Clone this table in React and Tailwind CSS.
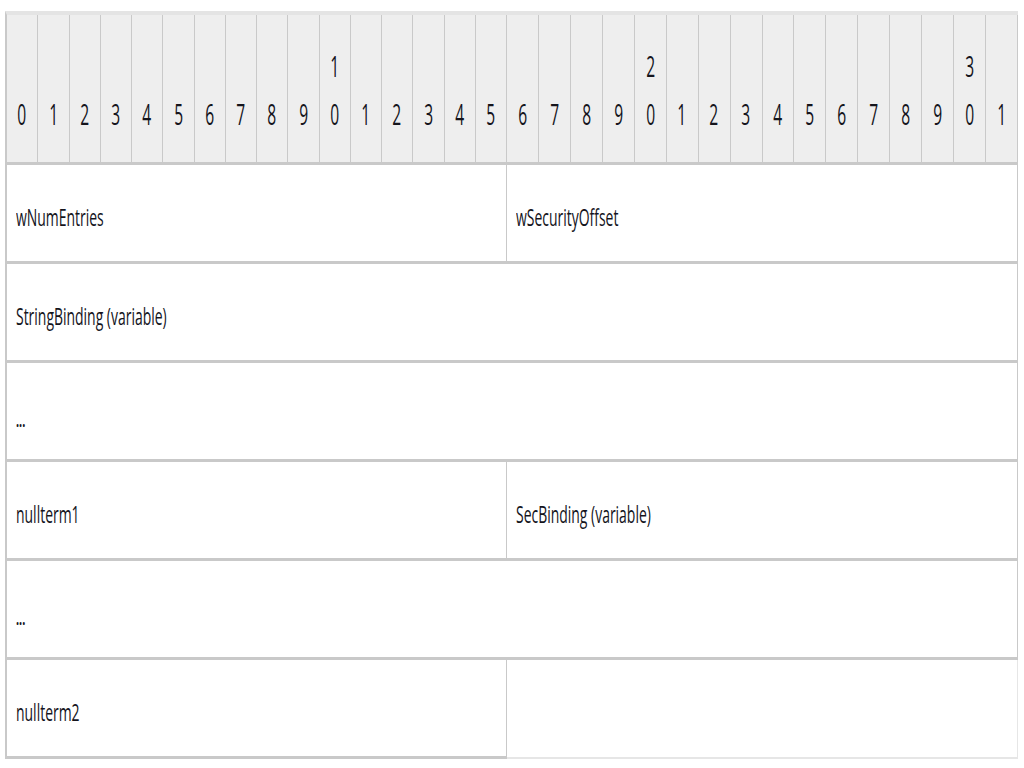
import React from 'react';

const bits = Array.from({ length: 32 }, (_, i) => i);

const Txt = ({ children }) => (
    <span className='inline-block origin-left scale-x-[0.9] scale-y-[1.5] whitespace-nowrap'>{children}</span>
);

const HeadCell = ({ n }) => {
    const tens = n % 10 === 0 && n > 0 ? String(n / 10) : '';
    return (
        <div className='flex flex-col justify-end items-center border-r border-[#c9c9c9] bg-[#eeeeee] pb-[24px]'>
            <div className='flex flex-col items-center origin-bottom scale-x-[0.78] scale-y-[1.5] text-[20px] leading-[32px] font-medium'>
                <span className='h-[32px]'>{tens}</span>
                <span>{n % 10}</span>
            </div>
        </div>
    );
};

const Cell = ({ label, className = '' }) => (
    <div className={`flex items-center pl-[9px] pt-[10px] border-r border-[#c9c9c9] ${className}`}>
        {label && <Txt>{label}</Txt>}
    </div>
);

const App = () => {
    return (
        <div className='w-[1024px] h-[768px] bg-white pt-[11px] pl-[5px] pr-[6px] text-[#14141c]' style={{ fontFamily: '"Open Sans", "Liberation Sans", sans-serif' }}>
            <div className='flex flex-col border-l-2 border-[#c9c9c9] border-t-[4px] border-t-[#e4e4e4]'>
                {/* bit ruler */}
                <div className='flex h-[150px] border-b-[3px] border-[#c9c9c9]'>
                    <div className='grid grid-cols-16 w-[500px]'>
                        {bits.slice(0, 16).map(n => <HeadCell key={n} n={n} />)}
                    </div>
                    <div className='grid grid-cols-16 flex-1'>
                        {bits.slice(16).map(n => <HeadCell key={n} n={n} />)}
                    </div>
                </div>

                <div className='flex h-[99px] border-b-[3px] border-[#c9c9c9] text-[15.5px]'>
                    <Cell label='wNumEntries' className='w-[500px]' />
                    <Cell label='wSecurityOffset' className='flex-1' />
                </div>
                <div className='flex h-[99px] border-b-[3px] border-[#c9c9c9] text-[15.5px]'>
                    <Cell label='StringBinding (variable)' className='flex-1' />
                </div>
                <div className='flex h-[99px] border-b-[3px] border-[#c9c9c9] text-[15.5px]'>
                    <Cell label='...' className='flex-1 text-[12px] font-bold pt-[20px]' />
                </div>
                <div className='flex h-[99px] border-b-[3px] border-[#c9c9c9] text-[15.5px]'>
                    <Cell label='nullterm1' className='w-[500px]' />
                    <Cell label='SecBinding (variable)' className='flex-1' />
                </div>
                <div className='flex h-[99px] border-b-[3px] border-[#c9c9c9] text-[15.5px]'>
                    <Cell label='...' className='flex-1 text-[12px] font-bold pt-[20px]' />
                </div>
                <div className='flex h-[99px] text-[15.5px]'>
                    <Cell label='nullterm2' className='w-[500px] border-b-[3px] border-b-[#c9c9c9]' />
                    <div className='flex-1 border-r border-b-2 border-[#e6e6e6]'></div>
                </div>
            </div>
        </div>
    );
};

export default App;
